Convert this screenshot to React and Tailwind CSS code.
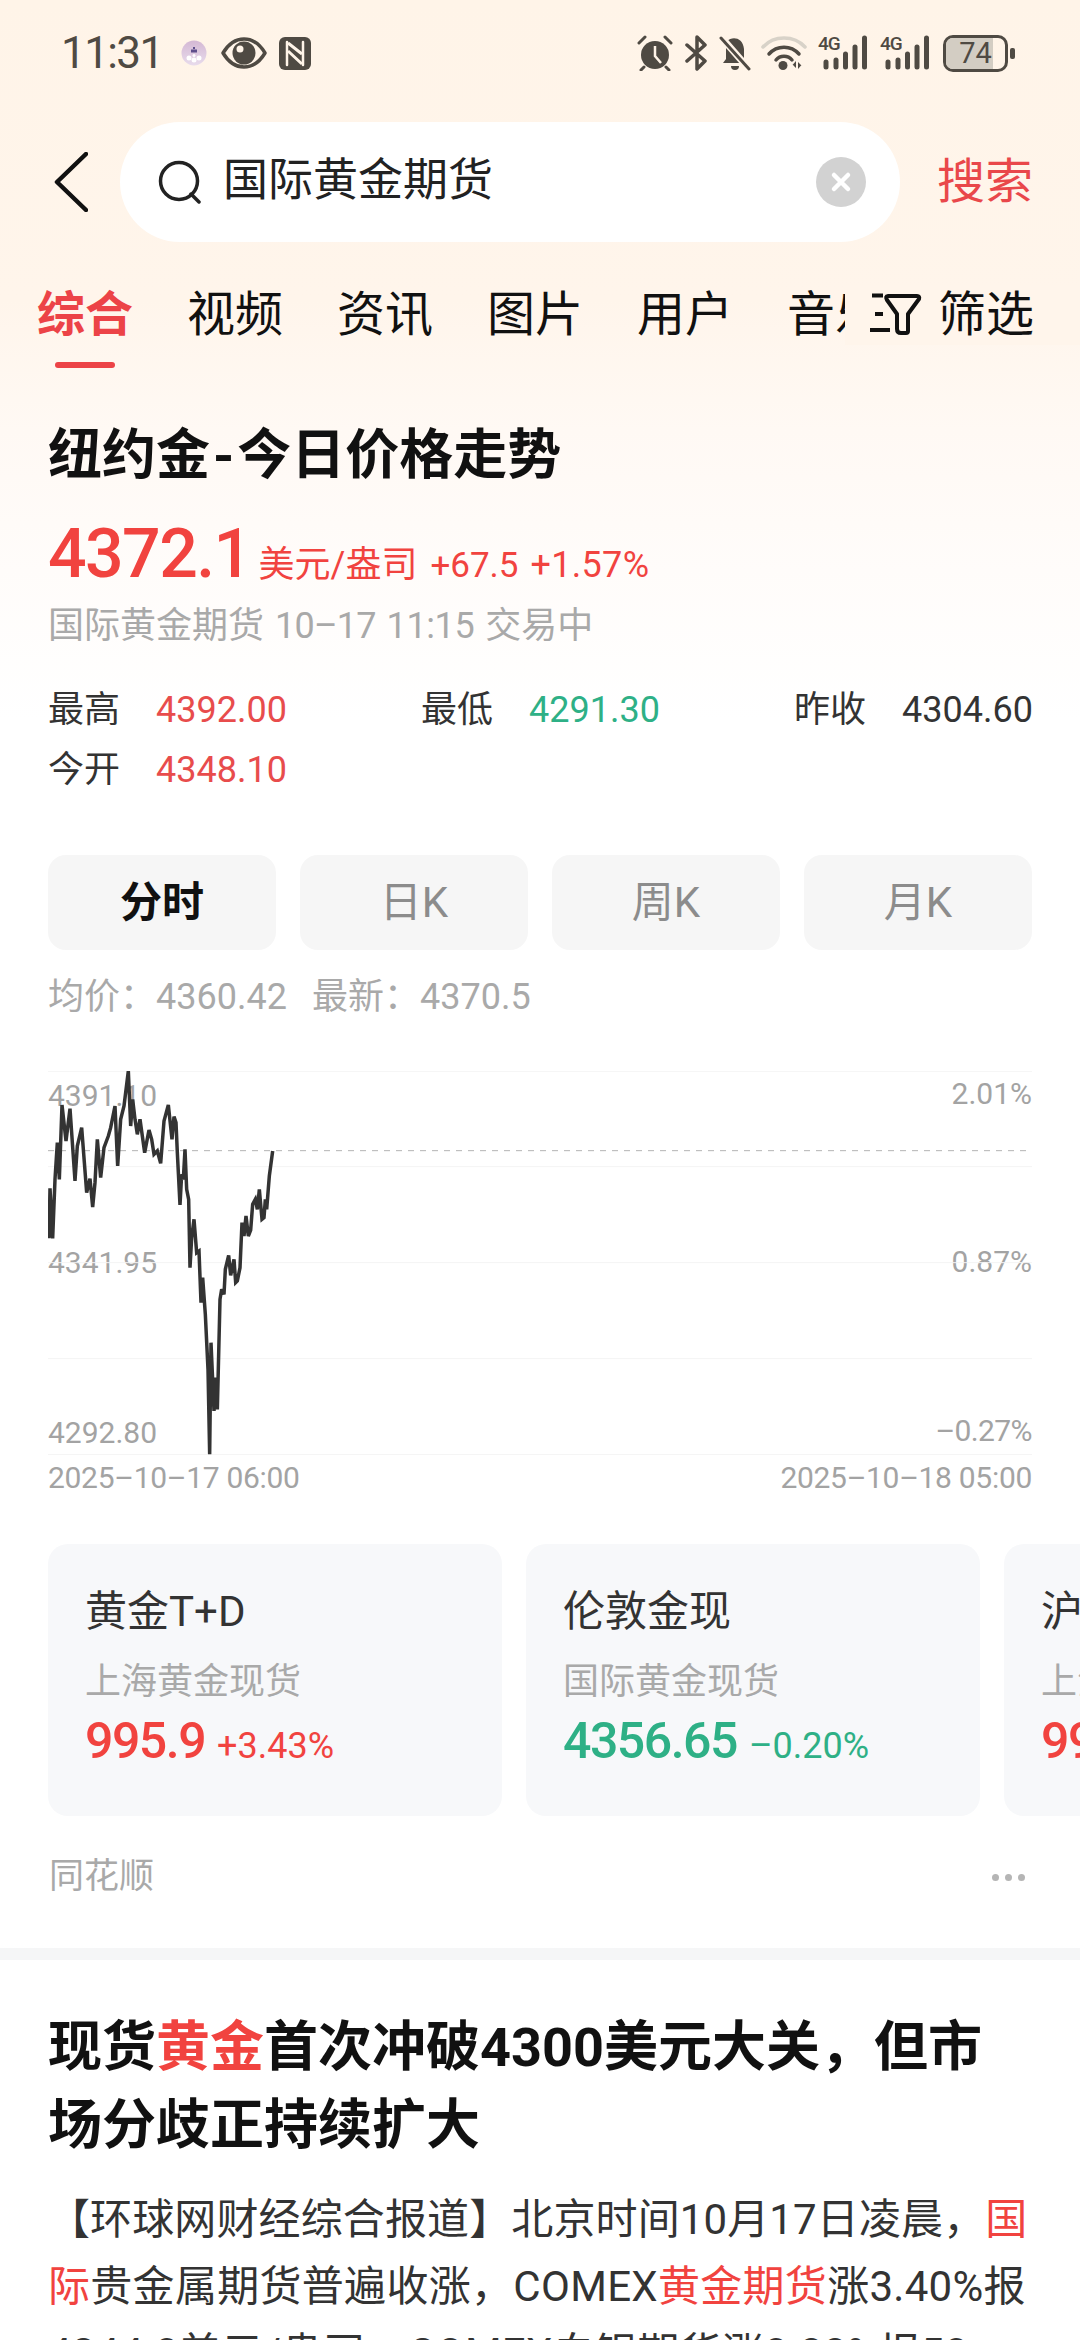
const ink = '#4f4a43';
const COMMA = '\uFF0C';
const COLON = '\uFF1A';
const pts = [[147,597],[150,447],[158,597],[165,420],[172,310],[178,420],[186,197],[198,305],[210,208],[225,425],[232,320],[245,265],[260,460],[270,418],[278,503],[285,430],[292,300],[302,415],[312,325],[325,290],[332,265],[345,200],[353,380],[362,240],[372,200],[385,95],[392,260],[398,180],[405,240],[412,285],[420,240],[427,290],[434,340],[447,272],[455,300],[462,345],[472,335],[482,372],[492,245],[505,197],[516,300],[522,232],[528,250],[532,340],[540,497],[545,405],[550,420],[555,330],[560,450],[566,480],[570,685],[575,595],[582,540],[590,640],[597,635],[603,790],[608,715],[616,825],[624,990],[629,1245],[633,910],[642,1115],[645,1015],[652,1110],[660,780],[665,750],[672,765],[676,690],[686,648],[692,708],[702,660],[707,730],[712,725],[720,685],[726,550],[732,590],[738,530],[745,590],[752,572],[758,495],[766,480],[772,510],[778,450],[786,540],[792,535],[796,480],[800,510],[808,410],[818,335]].map(p => p.join(',')).join(' ');

function Signal() {
  return (
    <div className="relative w-[50px] h-[36px]">
      <span className="absolute left-0 top-[-1px] text-[19px] leading-[19px] font-medium text-[#4f4a43] tracking-[-1px]">4G</span>
      <svg width="50" height="36" viewBox="0 0 50 36" className="absolute inset-0">
        <g stroke={ink} strokeWidth="5" strokeLinecap="round">
          <path d="M8 27V32" /><path d="M18 25V32" /><path d="M27.500 19V32" /><path d="M37 12V32" /><path d="M46.500 3V32" />
        </g>
      </svg>
    </div>
  );
}

function StatusBar() {
  return (
    <div className="flex items-center justify-between h-[46px] pl-[61px] pr-[65px]">
      <div className="flex items-center">
        <span className="text-[44px] leading-[46px] text-[#4f4a43] w-[118px] tracking-[-1.6px]">11:31</span>
        <svg width="26" height="26" viewBox="0 0 26 26" className="ml-[2px]">
          <defs>
            <linearGradient id="av" x1="0" y1="0" x2="0" y2="1"><stop offset="0" stopColor="#d4b8d4" /><stop offset="1" stopColor="#e8dcec" /></linearGradient>
          </defs>
          <circle cx="13" cy="13" r="12.500" fill="url(#av)" />
          <path d="M10 9.500h6v3h-6zM12 7h2v2h-2z" fill="#5f4f8c" />
          <circle cx="8" cy="18" r="2.500" fill="#fff" /><circle cx="13" cy="20" r="2.500" fill="#fff" /><circle cx="18" cy="18" r="2.500" fill="#fff" /><circle cx="13" cy="15.500" r="1.500" fill="#fff" />
        </svg>
        <svg width="46" height="32" viewBox="0 0 46 32" className="ml-[14px]">
          <path d="M2 16C8 6 15 2 23 2s15 4 21 14c-6 10-13 14-21 14S8 26 2 16Z" fill="none" stroke={ink} strokeWidth="3.500" strokeLinejoin="round" />
          <circle cx="23" cy="16" r="11.500" fill={ink} />
          <circle cx="19" cy="12" r="3.500" fill="#fff4e8" />
        </svg>
        <svg width="32" height="33" viewBox="0 0 32 33" className="ml-[12px]">
          <rect x="0" y="0" width="32" height="33" rx="6" fill={ink} />
          <path d="M8 5v23M24 5v23" stroke="#fff4e8" strokeWidth="2.500" strokeLinecap="round" />
          <path d="M9 6l14 11M9 14l14 13" stroke="#fff4e8" strokeWidth="3" />
        </svg>
      </div>
      <div className="flex items-center">
        <svg width="36" height="36" viewBox="0 0 36 36">
          <circle cx="18" cy="20" r="14" fill={ink} />
          <path d="M18 11v10l6 7" fill="none" stroke="#fff4e8" strokeWidth="2.500" />
          <path d="M2 8l6-6M34 8l-6-6M7 32l-3 3M29 32l3 3" stroke={ink} strokeWidth="3" strokeLinecap="round" />
        </svg>
        <svg width="22" height="36" viewBox="0 0 22 36" className="ml-[12px]">
          <path d="M2 10l18 16-8 8V2l8 8L2 26" fill="none" stroke={ink} strokeWidth="3.500" strokeLinejoin="round" strokeLinecap="round" />
        </svg>
        <svg width="32" height="36" viewBox="0 0 32 36" className="ml-[12px]">
          <path d="M8 6C13 1 24 2 25 14v10l3 4H4l3-4V12Z" fill={ink} />
          <path d="M12 31h8a4 4 0 0 1-8 0Z" fill={ink} />
          <path d="M2 2l28 32" stroke="#fff4e8" strokeWidth="7" />
          <path d="M2 3l28 31" stroke={ink} strokeWidth="3" strokeLinecap="round" />
        </svg>
        <svg width="46" height="36" viewBox="0 0 46 36" className="ml-[10px]">
          <path d="M2 12C13 0 33 0 44 12" fill="none" stroke="#d8d2c8" strokeWidth="3.500" strokeLinecap="round" />
          <path d="M8 19C16 10 30 10 38 19" fill="none" stroke={ink} strokeWidth="3.500" strokeLinecap="round" />
          <path d="M15 25C19 20 27 20 31 25" fill="none" stroke={ink} strokeWidth="3.500" strokeLinecap="round" />
          <circle cx="22" cy="30.500" r="4.500" fill={ink} />
          <path d="M35 30l-3.500 0 3.500-4zM37 30l3.500 0-3.500 4zM37 27l0 3 3 0zM35 33l0-3-3 0z" fill={ink} />
        </svg>
        <div className="ml-[11px]"><Signal /></div>
        <div className="ml-[12px]"><Signal /></div>
        <div className="relative ml-[13px] w-[65px] h-[37px] rounded-[10px] border-[3px] border-[#4f4a43] overflow-hidden">
          <div className="h-full w-[47px] bg-[#d3cdc3]" />
          <span className="absolute inset-0 flex items-center justify-center text-[29px] leading-none text-[#4f4a43]">74</span>
        </div>
        <div className="ml-[2px] w-[5px] h-[11px] rounded-[2px] bg-[#4f4a43]" />
      </div>
    </div>
  );
}

function SearchBar() {
  return (
    <div className="flex items-center h-[120px] mt-[46px] pl-[54px]">
      <svg width="34" height="60" viewBox="0 0 34 60">
        <path d="M32 2 3 30l29 28" fill="none" stroke="#111" strokeWidth="4.500" strokeLinecap="round" strokeLinejoin="round" />
      </svg>
      <div className="flex items-center ml-[32px] w-[780px] h-[120px] rounded-full bg-white pl-[38px]">
        <svg width="44" height="44" viewBox="0 0 44 44">
          <circle cx="21" cy="21" r="18.500" fill="none" stroke="#222" strokeWidth="3.500" />
          <path d="M33 34l8 8" stroke="#222" strokeWidth="3.500" strokeLinecap="round" />
        </svg>
        <span className="ml-[21px] text-[45px] leading-[60px] text-[#222] w-[593px] -translate-y-[1px]">国际黄金期货</span>
        <div className="flex items-center justify-center w-[50px] h-[50px] rounded-full bg-[#d2d2d2]">
          <svg width="22" height="22" viewBox="0 0 22 22"><path d="M4 4l14 14M18 4 4 18" stroke="#fff" strokeWidth="4.500" strokeLinecap="round" /></svg>
        </div>
      </div>
      <span className="ml-[37px] text-[48px] leading-[60px] text-[#e9474a] whitespace-nowrap">搜索</span>
    </div>
  );
}

function Tabs() {
  const tabs = ['视频', '资讯', '图片', '用户', '音乐'];
  return (
    <div className="relative h-[133px] mt-[43px] overflow-hidden">
      <div className="flex gap-[54px] pl-[37px]">
        <div className="flex flex-col items-center">
          <span className="text-[48px] leading-[60px] font-bold text-[#ec4347] whitespace-nowrap">综合</span>
          <span className="mt-[17px] w-[60px] h-[6px] rounded-full bg-[#ec4347]" />
        </div>
        {tabs.map(t => <span key={t} className="text-[48px] leading-[60px] text-[#111] whitespace-nowrap">{t}</span>)}
      </div>
      <div className="absolute right-0 top-0 h-[60px] w-[235px] flex items-center bg-[#fff5eb] pl-[25px]">
        <svg width="52" height="44" viewBox="0 0 52 44">
          <path d="M2 2.500H13M5 21H13M0 37H20" stroke="#111" strokeWidth="4" />
          <path d="M18 3H47q3 0 2 3L38 21V38q0 2-2 2h-5q-4 0-4-4V21L17 7q-2-4 1-4Z" fill="#fff5eb" stroke="#111" strokeWidth="4" strokeLinejoin="round" />
        </svg>
        <span className="ml-[16px] text-[48px] leading-[60px] text-[#111] whitespace-nowrap">筛选</span>
      </div>
    </div>
  );
}

function Stat({ label, value, color }) {
  return (
    <div className="flex items-center h-[60px]">
      <span className="w-[108px] text-[36px] text-[#333]">{label}</span>
      <span className={`text-[36px] ${color}`}>{value}</span>
    </div>
  );
}

function Quote() {
  return (
    <div className="pl-[48px] pr-[48px]">
      <h1 className="h-[64px] mt-[6px] text-[54px] leading-[64px] font-bold text-[#111] whitespace-nowrap">纽约金<span className="mx-[3px]">-</span>今日价格走势</h1>
      <div className="flex items-baseline mt-[31px] h-[70px] leading-[70px] whitespace-nowrap text-[#f1433f]">
        <span className="text-[68px] font-medium tracking-[-1.6px]">4372.1</span>
        <span className="ml-[8px] text-[36px]">美元/盎司</span>
        <span className="ml-[13px] text-[35px]">+67.5</span>
        <span className="ml-[12px] text-[36px] tracking-[0.3px]">+1.57%</span>
      </div>
      <div className="flex items-center h-[44px] mt-[15px] gap-[11px] text-[36px] text-[#a9a9a9] whitespace-nowrap">
        <span>国际黄金期货</span><span className="tracking-[-0.8px]">10–17</span><span className="tracking-[-0.4px]">11:15</span><span>交易中</span>
      </div>
      <div className="grid grid-cols-[373px_373px_1fr] mt-[32px] whitespace-nowrap">
        <Stat label="最高" value="4392.00" color="text-[#e84c4c]" />
        <Stat label="最低" value="4291.30" color="text-[#2eb086]" />
        <Stat label="昨收" value="4304.60" color="text-[#333]" />
        <Stat label="今开" value="4348.10" color="text-[#e84c4c]" />
      </div>
    </div>
  );
}

function Periods() {
  const items = ['分时', '日K', '周K', '月K'];
  return (
    <div className="flex gap-[24px] px-[48px] mt-[55px]">
      {items.map((t, i) => (
        <div key={t} className={`flex items-center justify-center w-[228px] h-[95px] rounded-[18px] bg-[#f6f6f6] text-[42px] ${i === 0 ? 'font-bold text-[#111]' : 'text-[#8c8c8c]'}`}>{t}</div>
      ))}
    </div>
  );
}

function Chart() {
  const grid = [96, 382, 670, 958, 1246];
  return (
    <div className="mx-[48px]">
      <div className="relative h-[384px] mt-[52px]">
        <span className="absolute left-0 top-[7px] text-[30px] leading-[36px] text-[#a3a3a3]">4391.10</span>
        <span className="absolute left-0 top-[174px] text-[30px] leading-[36px] text-[#a3a3a3]">4341.95</span>
        <span className="absolute left-0 top-[344px] text-[30px] leading-[36px] text-[#a3a3a3]">4292.80</span>
        <span className="absolute right-0 top-[5px] text-[30px] leading-[36px] text-[#a3a3a3]">2.01%</span>
        <span className="absolute right-0 top-[173px] text-[30px] leading-[36px] text-[#a3a3a3]">0.87%</span>
        <span className="absolute right-0 top-[342px] text-[30px] leading-[36px] text-[#a3a3a3] tracking-[-0.6px]">–0.27%</span>
        <svg width="984" height="384" viewBox="144 95 2952 1152" className="absolute inset-0">
          {grid.map(y => <path key={y} d={`M144 ${y}H3096`} stroke="#f4f4f4" strokeWidth="3" />)}
          <path d="M144 334H3096" stroke="#b4b4b4" strokeWidth="3" strokeDasharray="18 18" />
          <polyline points={pts} fill="none" stroke="#333" strokeWidth="10.500" strokeLinejoin="miter" strokeMiterlimit="3" />
        </svg>
      </div>
      <div className="flex justify-between h-[36px] mt-[5px] text-[30px] leading-[36px] text-[#a3a3a3] tracking-[-0.3px]">
        <span>2025–10–17 06:00</span><span>2025–10–18 05:00</span>
      </div>
    </div>
  );
}

function Card({ title, sub, value, delta, color }) {
  return (
    <div className="shrink-0 w-[454px] h-[272px] rounded-[20px] bg-[#f7f8fa] pl-[37px] pt-[43px] whitespace-nowrap">
      <div className="h-[50px] text-[42px] leading-[50px] text-[#333]">{title}</div>
      <div className="h-[44px] mt-[23px] text-[36px] leading-[44px] text-[#a9a9a9]">{sub}</div>
      <div className={`flex items-baseline h-[60px] mt-[7px] leading-[60px] ${color}`}>
        <span className="text-[50px] font-medium tracking-[-1.5px]">{value}</span>
        <span className="ml-[12px] text-[36px]">{delta}</span>
      </div>
    </div>
  );
}

function Cards() {
  return (
    <div className="flex gap-[24px] pl-[48px] mt-[48px] overflow-hidden">
      <Card title="黄金T+D" sub="上海黄金现货" value="995.9" delta="+3.43%" color="text-[#f1433f]" />
      <Card title="伦敦金现" sub="国际黄金现货" value="4356.65" delta="–0.20%" color="text-[#2eb086]" />
      <Card title="沪金主连" sub="上海黄金期货" value="995.9" delta="+3.43%" color="text-[#f1433f]" />
    </div>
  );
}

function Source() {
  return (
    <div className="flex items-center justify-between h-[44px] mt-[39px] pl-[49px] pr-[55px]">
      <span className="text-[35px] text-[#a9a9a9]">同花顺</span>
      <div className="flex gap-[6px]">
        <span className="w-[7px] h-[7px] rounded-full bg-[#b5b5b5]" />
        <span className="w-[7px] h-[7px] rounded-full bg-[#b5b5b5]" />
        <span className="w-[7px] h-[7px] rounded-full bg-[#b5b5b5]" />
      </div>
    </div>
  );
}

function Article() {
  const R = ({ children }) => <span className="text-[#f1433f]">{children}</span>;
  return (
    <div className="pl-[48px] pt-[49px] whitespace-nowrap">
      <div className="text-[54px] leading-[78px] font-bold text-[#111]">现货<R>黄金</R>首次冲破4300美元大关{COMMA}但市</div>
      <div className="text-[54px] leading-[78px] font-bold text-[#111]">场分歧正持续扩大</div>
      <div className="mt-[21px] text-[42px] leading-[67px] text-[#333]">
        <div className="tracking-[0.12px]">【环球网财经综合报道】北京时间10月17日凌晨{COMMA}<R>国</R></div>
        <div className="tracking-[0.3px]"><R>际</R>贵金属期货普遍收涨{COMMA}COMEX<R>黄金期货</R>涨3.40%报</div>
        <div className="tracking-[0.3px]">4344.0美元/盎司{COMMA}COMEX白银期货涨0.88%报50</div>
      </div>
    </div>
  );
}

export default function App() {
  return (
    <div className="w-[1080px] h-[2340px] overflow-hidden bg-white font-[Roboto,'Noto_Sans_CJK_SC',sans-serif]">
      <div className="pt-[30px] bg-[linear-gradient(180deg,#fff4e8_0,#fff5eb_300px,#fff9f4_430px,#fffcfa_570px,#ffffff_720px,#ffffff_100%)]">
        <StatusBar />
        <SearchBar />
        <Tabs />
        <Quote />
        <Periods />
        <div className="flex items-center h-[44px] mt-[25px] pl-[48px] text-[36px] text-[#a9a9a9] whitespace-nowrap">
          <span className="w-[108px]">均价{COLON}</span><span className="w-[156px]">4360.42</span><span className="w-[108px]">最新{COLON}</span><span>4370.5</span>
        </div>
        <Chart />
        <Cards />
        <Source />
      </div>
      <div className="h-[12px] mt-[49px] bg-[#f5f6f7]" />
      <Article />
    </div>
  );
}
